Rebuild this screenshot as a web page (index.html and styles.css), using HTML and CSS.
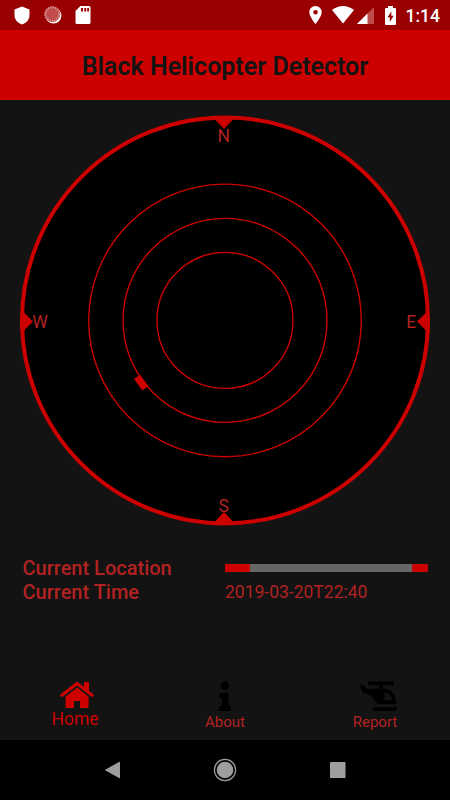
FILE: index.html
```html
<!DOCTYPE html>
<html lang="en">
<head>
  <meta charset="UTF-8">
  <meta name="viewport" content="width=device-width, initial-scale=1.0">
  <title>Black Helicopter Detector</title>
  <link rel="stylesheet" href="styles.css">
</head>
<body>
  <!-- Status bar -->
  <div class="status-bar">
    <div class="status-left">
      <svg width="16" height="19" viewBox="0 0 16 19"><path d="M8 0.5L15.5 3.4V9C15.5 13.5 12.5 17 8 18.5C3.5 17 0.5 13.5 0.5 9V3.4Z" fill="#fff"/></svg>
      <svg class="sync-icon" width="18" height="18" viewBox="0 0 18 18">
        <circle cx="9.4" cy="9.6" r="8" fill="#fff"/>
        <circle cx="8.3" cy="8.2" r="8" fill="#c04c4c"/>
        <circle cx="8.3" cy="8.2" r="6.9" fill="none" stroke="#dc9c9c" stroke-width="2" stroke-dasharray="1.2 1.3"/>
      </svg>
      <svg class="sd-icon" width="16" height="18" viewBox="0 0 16 18">
        <path d="M5.5 0H14Q15.5 0 15.5 1.5V16.5Q15.5 18 14 18H2Q0.5 18 0.5 16.5V5Z" fill="#fff"/>
        <path d="M6 2h2v3.5H6zM9.2 2h2v3.5h-2zM12.2 2h1.8v3.5h-1.8z" fill="#990000"/>
      </svg>
    </div>
    <div class="status-right">
      <svg width="13" height="18" viewBox="0 0 13 18"><path fill-rule="evenodd" d="M6.5 0A6.2 6.2 0 0 1 12.7 6.2C12.7 10.5 6.5 18 6.5 18S0.3 10.5 0.3 6.2A6.2 6.2 0 0 1 6.5 0ZM6.5 4A2.3 2.3 0 1 0 6.5 8.6A2.3 2.3 0 1 0 6.5 4Z" fill="#fff"/></svg>
      <svg class="wifi-icon" width="22" height="18" viewBox="0 0 22 18"><path d="M11 17.5L0 4Q11 -3.8 22 4Z" fill="#fff"/></svg>
      <svg class="signal-icon" width="17" height="17" viewBox="0 0 17 17">
        <path d="M0 17L17 0V17Z" fill="#c04c4c"/>
        <path d="M0 17L10.5 6.5V17Z" fill="#fff"/>
      </svg>
      <svg class="battery-icon" width="11" height="19" viewBox="0 0 11 19">
        <path d="M3 0H8V2H10Q11 2 11 3V18Q11 19 10 19H1Q0 19 0 18V3Q0 2 1 2H3Z" fill="#fff"/>
        <path d="M6.3 5.5L2.5 11.3H4.8V16L8.6 9.8H6.3Z" fill="#990000"/>
      </svg>
      <span class="clock">1:14</span>
    </div>
  </div>

  <!-- Header -->
  <header>
    <h1>Black Helicopter Detector</h1>
  </header>

  <main>
    <!-- Radar -->
    <svg class="radar" width="410" height="411" viewBox="0 0 410 411">
      <circle class="radar-edge" cx="205" cy="205.4" r="203"/>
      <circle class="ring" cx="205" cy="205.4" r="136.3"/>
      <circle class="ring" cx="205" cy="205.4" r="102"/>
      <circle class="ring" cx="205" cy="205.4" r="68"/>
      <path class="marker" d="M193.5 3H214.5L204 14ZM193.5 408H214.5L204 397ZM2 195.5V217.5L13 206.5ZM408 195.5V217.5L397 206.5Z"/>
      <rect class="marker" x="-7" y="-3.7" width="14" height="7.4" transform="translate(121.2 267.6) rotate(54)"/>
      <text x="203.8" y="26.5">N</text>
      <text x="203.8" y="397">S</text>
      <text x="20" y="212.8">W</text>
      <text x="391.3" y="212.8">E</text>
    </svg>

    <!-- Location and time -->
    <div class="details">
      <span class="label">Current Location</span>
      <div class="progress"><div class="progress-track"></div></div>
      <span class="label">Current Time</span>
      <span class="value">2019-03-20T22:40</span>
    </div>
  </main>

  <!-- Tabs -->
  <nav class="tabs">
    <a class="tab active">
      <svg class="house" width="34" height="30" viewBox="0 0 34 30">
        <path d="M1.8 14.2L17 2.4L32.2 14.2" fill="none" stroke="#cc0000" stroke-width="3.2" stroke-linecap="round" stroke-linejoin="round"/>
        <path d="M24 1H29V11L24 7Z" fill="#cc0000"/>
        <path d="M17 6.6L28.6 15.8V25.5Q28.6 27 27 27H20V20H14V27H7Q5.5 27 5.5 25.5V15.8Z" fill="#cc0000"/>
      </svg>
      <span>Home</span>
    </a>
    <a class="tab">
      <svg width="14" height="30" viewBox="0 0 14 30">
        <circle cx="7" cy="4.7" r="4.2"/>
        <path d="M2.3 12H9.5Q10.5 12 10.5 13V25H12Q13 25 13 26V29Q13 30 12 30H2.2Q1.2 30 1.2 29V26Q1.2 25 2.2 25H4V17H2.3Q1.3 17 1.3 16V13Q1.3 12 2.3 12Z"/>
      </svg>
      <span>About</span>
    </a>
    <a class="tab">
      <svg class="copter" width="38" height="30" viewBox="0 0 38 30">
        <path d="M9 0.5H33Q34 0.5 34 1.5V3.3Q34 4.3 33 4.3H23V7.5C31 7.8 36 13.5 36 22Q36 23.3 34.7 23.3H19Q18 23.3 17.3 22.5L11 14.5L3 11.5Q2.3 11.2 2 10.5L0.2 5Q0 4 1 4H3.3L6.5 7.8H19V4.3H9Q8 4.3 8 3.3V1.5Q8 0.5 9 0.5Z"/>
        <path d="M24.5 11.5C29 12 32 15 32.2 19.3H24.5Z" fill="#131313"/>
        <path d="M14 26.3H32.5Q34 26.3 35 25.2L37 26.8Q37.5 27.3 37 28Q35.3 30 32.5 30H14Q13 30 13 29V27.3Q13 26.3 14 26.3Z"/>
      </svg>
      <span>Report</span>
    </a>
  </nav>

  <!-- Android navigation -->
  <div class="system-nav">
    <div><svg width="24" height="24" viewBox="0 0 24 24"><path d="M4.6 12L18.5 4.2V19.8Z" fill="#9e9e9e" stroke="#9e9e9e" stroke-linejoin="round"/></svg></div>
    <div><svg width="24" height="24" viewBox="0 0 24 24"><circle cx="12" cy="12" r="10.6" fill="none" stroke="#9e9e9e" stroke-width="1.2"/><circle cx="12" cy="12" r="8.3" fill="#9e9e9e"/></svg></div>
    <div><svg width="24" height="24" viewBox="0 0 24 24"><rect x="4" y="4" width="15.5" height="16" rx="0.7" fill="#9e9e9e"/></svg></div>
  </div>
</body>
</html>
```
FILE: styles.css
```css
* {
  box-sizing: border-box;
}
body {
  font-family: Roboto, sans-serif;
  margin: 0;
  height: 800px;
  display: flex;
  flex-direction: column;
  overflow: hidden;
  background-color: #131313;
  color: #b22222;
}
svg {
  display: block;
}
.status-bar {
  height: 30px;
  padding: 0 10px 0 14px;
  display: flex;
  justify-content: space-between;
  align-items: center;
  background-color: #990000;
}
.status-left, .status-right {
  display: flex;
  align-items: center;
}
.sync-icon {
  margin-left: 14px;
}
.sd-icon {
  margin-left: 13px;
}
.wifi-icon {
  margin-left: 10px;
}
.signal-icon {
  margin-left: 3px;
}
.battery-icon {
  margin-left: 11px;
}
.clock {
  margin-left: 10px;
  font-size: 17.5px;
  font-weight: 500;
  line-height: 30px;
  padding-top: 1px;
  color: #fff;
}
header {
  height: 70px;
  background-color: #cc0000;
  text-align: center;
}
h1 {
  margin: 0;
  padding-top: 2px;
  font-size: 25px;
  font-weight: 600;
  line-height: 70px;
  color: #131313;
}
main {
  flex: 1;
}
.radar {
  margin: 15px auto 0;
}
.radar-edge {
  fill: #000;
  stroke: #cc0000;
  stroke-width: 4;
}
.ring {
  fill: none;
  stroke: #cc0000;
  stroke-width: 1.4;
}
.marker {
  fill: #cc0000;
}
.radar text {
  font-size: 17.5px;
  fill: #b22222;
  text-anchor: middle;
}
.details {
  display: grid;
  grid-template-columns: 202.5px 203px;
  grid-auto-rows: 24px;
  align-items: center;
  margin: 30px 0 0 22.5px;
}
.label {
  font-size: 20px;
  font-weight: 500;
}
.value {
  font-size: 17.5px;
}
.progress {
  height: 8px;
  background-color: #cc0000;
}
.progress-track {
  width: 162px;
  height: 8px;
  margin-left: 25px;
  background-color: #666;
}
.tabs {
  height: 60px;
  display: flex;
}
.tab {
  flex: 1;
  display: flex;
  flex-direction: column;
  align-items: center;
  padding-top: 1px;
  font-size: 15px;
  line-height: 22px;
}
.tab.active {
  color: #cc0000;
  font-size: 17.5px;
}
.tab.active span {
  margin-top: -3px;
}
.house {
  margin-left: 4px;
}
.copter {
  margin-left: 7px;
}
.system-nav {
  height: 60px;
  display: flex;
  justify-content: center;
  align-items: center;
  gap: 88.5px;
  background-color: #000;
}
```
